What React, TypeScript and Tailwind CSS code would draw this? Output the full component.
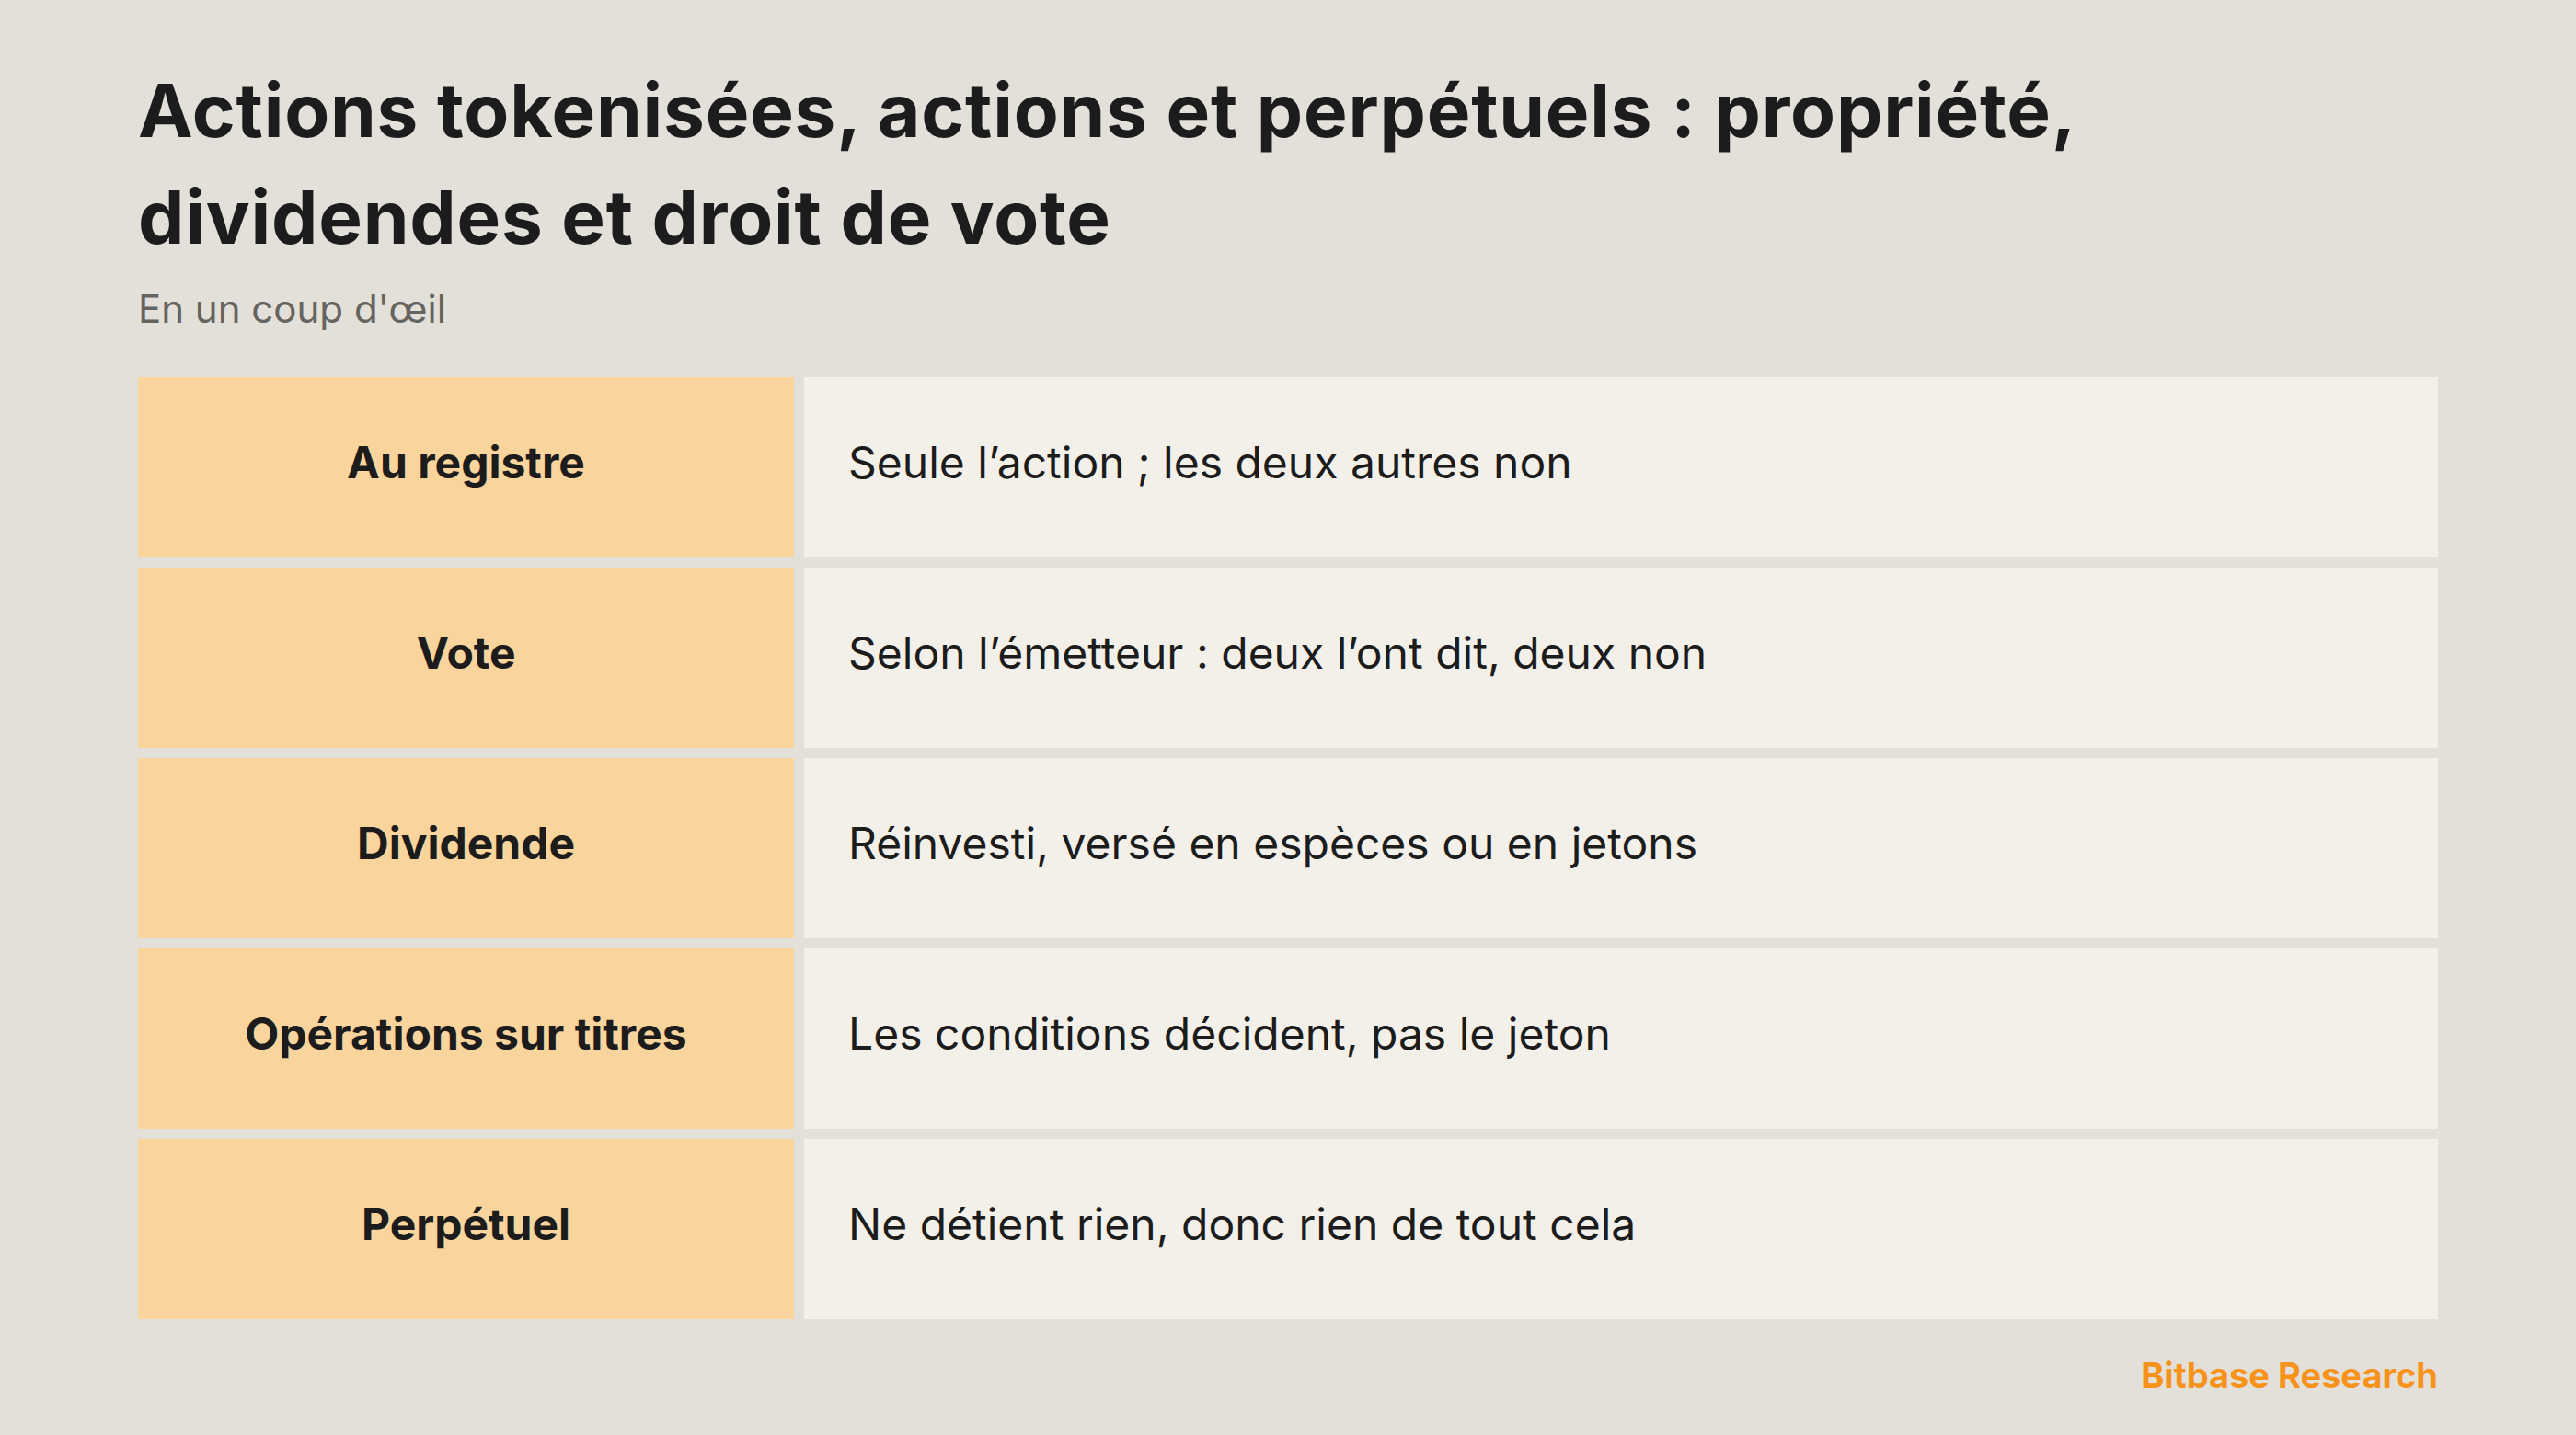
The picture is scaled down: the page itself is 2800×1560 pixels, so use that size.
const rows = [
  { label: "Au registre", value: "Seule l’action ; les deux autres non" },
  { label: "Vote", value: "Selon l’émetteur : deux l’ont dit, deux non" },
  { label: "Dividende", value: "Réinvesti, versé en espèces ou en jetons" },
  { label: "Opérations sur titres", value: "Les conditions décident, pas le jeton" },
  { label: "Perpétuel", value: "Ne détient rien, donc rien de tout cela" },
];

export default function App() {
  return (
    <div className="min-h-screen w-full bg-[#e3dfd9] px-[150px] pt-[62px] font-[Inter,sans-serif] text-[#1c1c1c]">
      {/* Title + subtitle */}
      <h1 className="text-[80px] font-bold leading-[116px] tracking-[0.01em]">
        Actions tokenisées, actions et perpétuels : propriété,
        <br />
        dividendes et droit de vote
      </h1>
      <p className="mt-[14px] text-[42px] leading-[56px] text-[#666460]">En un coup d'œil</p>

      {/* Comparison table */}
      <div className="mt-[46px] flex flex-col gap-[11px]">
        {rows.map((r) => (
          <div key={r.label} className="grid h-[196px] grid-cols-[713px_1fr] gap-[11px]">
            <div className="flex items-center justify-center bg-[#f9d49d] pb-[10px] text-[48px] font-bold">
              {r.label}
            </div>
            <div className="flex items-center bg-[#f3f0ea] pb-[10px] pl-[48px] text-[48px]">{r.value}</div>
          </div>
        ))}
      </div>

      <div className="mt-[33px] text-right text-[38px] font-bold text-[#f7931a]">Bitbase Research</div>
    </div>
  );
}
